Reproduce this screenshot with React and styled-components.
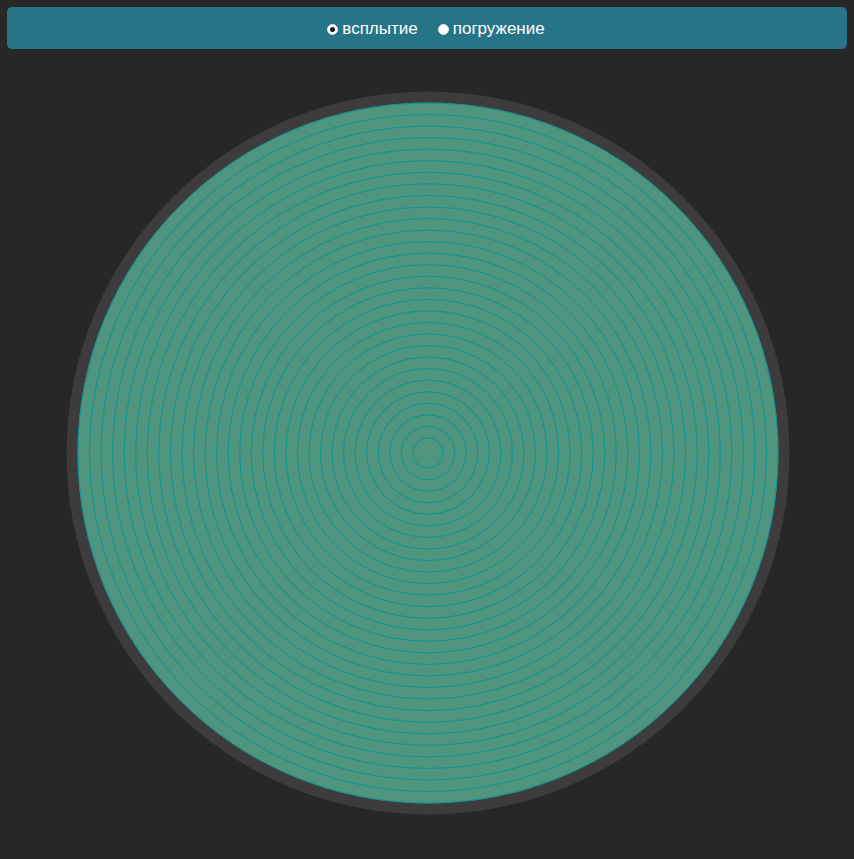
import React, { useState } from "react";
import styled, { createGlobalStyle } from "styled-components";

const Global = createGlobalStyle`
  html, body { margin: 0; padding: 0; background: #272727; }
  body { font-family: "Liberation Sans", Arial, sans-serif; }
`;

const Page = styled.div`
  padding: 7px;
  min-height: 845px;
  box-sizing: border-box;
`;

const Toolbar = styled.div`
  height: 42px;
  background: #287487;
  border-radius: 5px;
  display: flex;
  align-items: center;
  justify-content: center;
  gap: 20px;
  padding-left: 18px;
`;

const Option = styled.label`
  display: flex;
  align-items: center;
  gap: 4px;
  color: #ffffff;
  font-size: 17px;
  cursor: pointer;
  padding-top: 1px;
`;

const Dot = styled.span`
  width: 11px;
  height: 11px;
  margin-top: 2px;
  border-radius: 50%;
  background: #ffffff;
  border: 1px solid #e8e8e8;
  box-sizing: border-box;
  display: flex;
  align-items: center;
  justify-content: center;
  &::after {
    content: "";
    width: 5px;
    height: 5px;
    border-radius: 50%;
    background: ${(p) => (p.$checked ? "#1d1d1d" : "transparent")};
  }
`;

const Stage = styled.div`
  display: flex;
  justify-content: center;
  padding-top: 42px;
  padding-left: 1px;
`;

const rings = Array.from({ length: 30 }, (_, k) => 350 - 11.55 * k);

export default function App() {
  const [mode, setMode] = useState("up");
  return (
    <Page>
      <Global />
      <Toolbar>
        <Option onClick={() => setMode("up")}>
          <Dot $checked={mode === "up"} />
          всплытие
        </Option>
        <Option onClick={() => setMode("down")}>
          <Dot $checked={mode === "down"} />
          погружение
        </Option>
      </Toolbar>
      <Stage>
        <svg width="724" height="724" viewBox="-362 -362 724 724">
          <circle cx="0" cy="0" r="361.5" fill="#3d3b3b" />
          <circle cx="0" cy="0" r="350.5" fill="#4f947d" />
          {rings.map((r, i) => (
            <circle
              key={i}
              cx="0"
              cy="0"
              r={r}
              fill="none"
              stroke="#0a9494"
              strokeWidth="1"
            />
          ))}
        </svg>
      </Stage>
    </Page>
  );
}
